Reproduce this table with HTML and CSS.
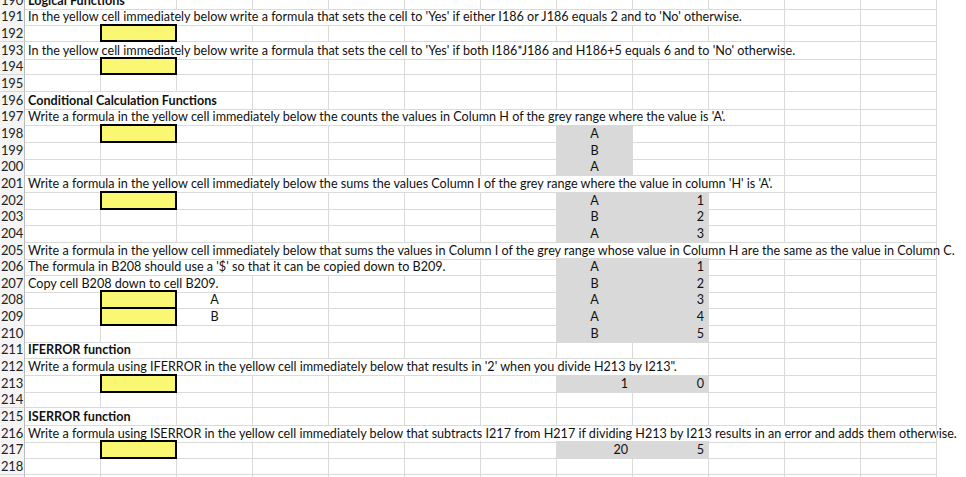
FILE: index.html
```html
<!DOCTYPE html>
<html>
<head>
<meta charset="utf-8">
<link rel="stylesheet" href="styles.css">
</head>
<body>
<div class="sheet">
<div class="grid">
<div class="r"><b>190</b><span class="t bold s2">Logical Functions</span><i></i><i></i><i></i><i></i><i></i><i></i><i></i><i></i><i></i><i></i></div>
<div class="r"><b>191</b><span class="t s10">In the yellow cell immediately below write a formula that sets the cell to 'Yes' if either I186 or J186 equals 2 and to 'No' otherwise.</span><i></i><i></i></div>
<div class="r"><b>192</b><i></i><i class="y"></i><i></i><i></i><i></i><i></i><i></i><i></i><i></i><i></i><i></i><i></i></div>
<div class="r"><b>193</b><span class="t s10">In the yellow cell immediately below write a formula that sets the cell to 'Yes' if both I186*J186 and H186+5 equals 6 and to 'No' otherwise.</span><i></i><i></i></div>
<div class="r"><b>194</b><i></i><i class="y"></i><i></i><i></i><i></i><i></i><i></i><i></i><i></i><i></i><i></i><i></i></div>
<div class="r"><b>195</b><i></i><i></i><i></i><i></i><i></i><i></i><i></i><i></i><i></i><i></i><i></i><i></i></div>
<div class="r"><b>196</b><span class="t bold s3">Conditional Calculation Functions</span><i></i><i></i><i></i><i></i><i></i><i></i><i></i><i></i><i></i></div>
<div class="r"><b>197</b><span class="t s10">Write a formula in the yellow cell immediately below the counts the values in Column H of the grey range where the value is 'A'.</span><i></i><i></i></div>
<div class="r"><b>198</b><i></i><i class="y"></i><i></i><i></i><i></i><i></i><i></i><i class="g c">A</i><i></i><i></i><i></i><i></i></div>
<div class="r"><b>199</b><i></i><i></i><i></i><i></i><i></i><i></i><i></i><i class="g c">B</i><i></i><i></i><i></i><i></i></div>
<div class="r"><b>200</b><i></i><i></i><i></i><i></i><i></i><i></i><i></i><i class="g c">A</i><i></i><i></i><i></i><i></i></div>
<div class="r"><b>201</b><span class="t s10">Write a formula in the yellow cell immediately below the sums the values Column I of the grey range where the value in column 'H' is 'A'.</span><i></i><i></i></div>
<div class="r"><b>202</b><i></i><i class="y"></i><i></i><i></i><i></i><i></i><i></i><i class="g c">A</i><i class="g n">1</i><i></i><i></i><i></i></div>
<div class="r"><b>203</b><i></i><i></i><i></i><i></i><i></i><i></i><i></i><i class="g c">B</i><i class="g n">2</i><i></i><i></i><i></i></div>
<div class="r"><b>204</b><i></i><i></i><i></i><i></i><i></i><i></i><i></i><i class="g c">A</i><i class="g n">3</i><i></i><i></i><i></i></div>
<div class="r"><b>205</b><span class="t s12">Write a formula in the yellow cell immediately below that sums the values in Column I of the grey range whose value in Column H are the same as the value in Column C.</span></div>
<div class="r"><b>206</b><span class="t s6">The formula in B208 should use a '$' so that it can be copied down to B209.</span><i></i><i class="g c">A</i><i class="g n">1</i><i></i><i></i><i></i></div>
<div class="r"><b>207</b><span class="t s3">Copy cell B208 down to cell B209.</span><i></i><i></i><i></i><i></i><i class="g c">B</i><i class="g n">2</i><i></i><i></i><i></i></div>
<div class="r"><b>208</b><i></i><i class="y"></i><i class="c">A</i><i></i><i></i><i></i><i></i><i class="g c">A</i><i class="g n">3</i><i></i><i></i><i></i></div>
<div class="r"><b>209</b><i></i><i class="y"></i><i class="c">B</i><i></i><i></i><i></i><i></i><i class="g c">A</i><i class="g n">4</i><i></i><i></i><i></i></div>
<div class="r"><b>210</b><i></i><i></i><i></i><i></i><i></i><i></i><i></i><i class="g c">B</i><i class="g n">5</i><i></i><i></i><i></i></div>
<div class="r"><b>211</b><span class="t bold s2">IFERROR function</span><i></i><i></i><i></i><i></i><i></i><i></i><i></i><i></i><i></i><i></i></div>
<div class="r"><b>212</b><span class="t s9">Write a formula using IFERROR in the yellow cell immediately below that results in '2' when you divide H213 by I213".</span><i></i><i></i><i></i></div>
<div class="r"><b>213</b><i></i><i class="y"></i><i></i><i></i><i></i><i></i><i></i><i class="g n">1</i><i class="g n">0</i><i></i><i></i><i></i></div>
<div class="r"><b>214</b><i></i><i></i><i></i><i></i><i></i><i></i><i></i><i></i><i></i><i></i><i></i><i></i></div>
<div class="r"><b>215</b><span class="t bold s2">ISERROR function</span><i></i><i></i><i></i><i></i><i></i><i></i><i></i><i></i><i></i><i></i></div>
<div class="r"><b>216</b><span class="t s11">Write a formula using ISERROR in the yellow cell immediately below that subtracts I217 from H217 if dividing H213 by I213 results in an error and adds them otherwise.</span><i></i></div>
<div class="r"><b>217</b><i></i><i class="y"></i><i></i><i></i><i></i><i></i><i></i><i class="g n">20</i><i class="g n">5</i><i></i><i></i><i></i></div>
<div class="r"><b>218</b><i></i><i></i><i></i><i></i><i></i><i></i><i></i><i></i><i></i><i></i><i></i><i></i></div>
<div class="r"><b>219</b><i></i><i></i><i></i><i></i><i></i><i></i><i></i><i></i><i></i><i></i><i></i><i></i></div>
</div>
</div>
</body>
</html>
```
FILE: styles.css
```css
html, body {
  margin: 0;
  padding: 0;
  background: #ffffff;
}
.sheet {
  width: 966px;
  height: 477px;
  overflow: hidden;
  font-family: Lato, "Open Sans", sans-serif;
  font-size: 12.6px;
  color: #111111;
}
.grid {
  margin-top: -8.33px;
}
.r {
  display: grid;
  grid-template-columns: 25px repeat(12, 76px);
  height: 16.667px;
  line-height: 16px;
}
.r > b {
  font-weight: normal;
  background: #f4f4f4;
  border-right: 1px solid #bcbcbc;
  border-bottom: 1px solid #d8d8d8;
  color: #222222;
  text-align: center;
  font-size: 13px;
  letter-spacing: -0.2px;
  overflow: hidden;
  white-space: nowrap;
}
.r > i, .r > span {
  font-style: normal;
  display: block;
  border-right: 1px solid #dadada;
  border-bottom: 1px solid #dadada;
  white-space: nowrap;
  overflow: visible;
  padding: 1px 0 0 0;
}
.t {
  padding-left: 3px !important;
}
.bold {
  font-weight: bold;
}
.s2 { grid-column: span 2; }
.s3 { grid-column: span 3; }
.s6 { grid-column: span 6; }
.s9 { grid-column: span 9; }
.s10 { grid-column: span 10; }
.s11 { grid-column: span 11; }
.s12 { grid-column: span 12; }
.r > .y {
  background: #faf873;
  border: 2px solid #000000;
  margin: -1px 0 0 -1px;
  position: relative;
  z-index: 1;
}
.r > .g {
  background: #d9d9d9;
  border-color: #d9d9d9;
}
.c {
  text-align: center;
}
.n {
  text-align: right;
  padding-right: 4px !important;
}
```
